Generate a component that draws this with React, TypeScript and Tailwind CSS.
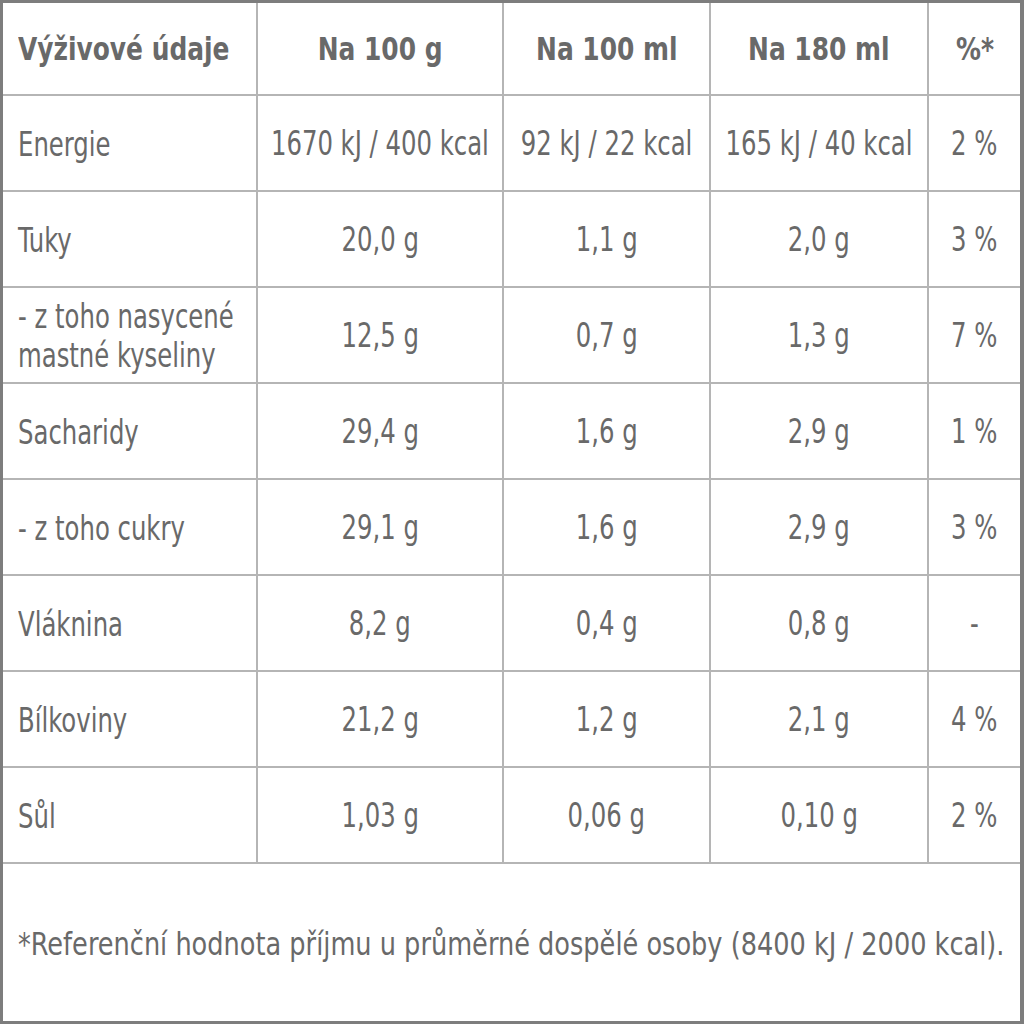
const rows: { label: string[]; a: string; b: string; c: string; d: string }[] = [
  { label: ["Energie"], a: "1670 kJ / 400 kcal", b: "92 kJ / 22 kcal", c: "165 kJ / 40 kcal", d: "2 %" },
  { label: ["Tuky"], a: "20,0 g", b: "1,1 g", c: "2,0 g", d: "3 %" },
  { label: ["- z toho nasycené", "mastné kyseliny"], a: "12,5 g", b: "0,7 g", c: "1,3 g", d: "7 %" },
  { label: ["Sacharidy"], a: "29,4 g", b: "1,6 g", c: "2,9 g", d: "1 %" },
  { label: ["- z toho cukry"], a: "29,1 g", b: "1,6 g", c: "2,9 g", d: "3 %" },
  { label: ["Vláknina"], a: "8,2 g", b: "0,4 g", c: "0,8 g", d: "-" },
  { label: ["Bílkoviny"], a: "21,2 g", b: "1,2 g", c: "2,1 g", d: "4 %" },
  { label: ["Sůl"], a: "1,03 g", b: "0,06 g", c: "0,10 g", d: "2 %" },
];

const font = {
  fontFamily: "'DejaVu Sans Condensed', 'Liberation Sans Narrow', Roboto, sans-serif",
};

// narrow text: the label font in the picture is a tall condensed face
function Narrow({ children, left }: { children: React.ReactNode; left?: boolean }) {
  return (
    <span
      className={`inline-block whitespace-nowrap scale-x-[0.82] ${left ? "origin-left" : "origin-center"}`}
    >
      {children}
    </span>
  );
}

export default function App() {
  return (
    <div
      style={font}
      className="w-[1024px] h-[1024px] bg-white text-[#696969] border-[#7d7d7d] border-t-[3px] border-l-[3px] border-r-4 border-b-[3px] flex flex-col overflow-hidden"
    >
      {/* Header */}
      <div className="flex h-[93px] border-b-2 border-[#b5b5b5] font-bold text-[32px]">
        <div className="w-[255px] border-r-2 border-[#b5b5b5] flex items-center pl-[15px]">
          <span className="inline-block whitespace-nowrap scale-x-[0.865] origin-left">Výživové údaje</span>
        </div>
        <div className="w-[246px] border-r-2 border-[#b5b5b5] flex items-center justify-center">
          <span className="inline-block whitespace-nowrap scale-x-[0.865]">Na 100 g</span>
        </div>
        <div className="w-[207px] border-r-2 border-[#b5b5b5] flex items-center justify-center">
          <span className="inline-block whitespace-nowrap scale-x-[0.865]">Na 100 ml</span>
        </div>
        <div className="w-[218px] border-r-2 border-[#b5b5b5] flex items-center justify-center">
          <span className="inline-block whitespace-nowrap scale-x-[0.865]">Na 180 ml</span>
        </div>
        <div className="flex-1 flex items-center justify-center">
          <span className="inline-block whitespace-nowrap scale-x-[0.865]">%*</span>
        </div>
      </div>

      {/* Rows */}
      {rows.map((r) => (
        <div key={r.label.join()} className="flex h-[96px] border-b-2 border-[#b5b5b5] text-[33px] leading-[39px]">
          <div className="w-[255px] border-r-2 border-[#b5b5b5] flex flex-col justify-center pl-[15px] pt-[2px]">
            {r.label.map((l) => (
              <div key={l}>
                <Narrow left>{l}</Narrow>
              </div>
            ))}
          </div>
          <div className="w-[246px] border-r-2 border-[#b5b5b5] flex items-center justify-center">
            <Narrow>{r.a}</Narrow>
          </div>
          <div className="w-[207px] border-r-2 border-[#b5b5b5] flex items-center justify-center">
            <Narrow>{r.b}</Narrow>
          </div>
          <div className="w-[218px] border-r-2 border-[#b5b5b5] flex items-center justify-center">
            <Narrow>{r.c}</Narrow>
          </div>
          <div className="flex-1 flex items-center justify-center">
            <Narrow>{r.d}</Narrow>
          </div>
        </div>
      ))}

      {/* Footnote */}
      <div className="flex-1 flex items-center pl-[15px] text-[32px] pt-[2px]">
        <span className="inline-block whitespace-nowrap scale-x-[0.89] origin-left">
          *Referenční hodnota příjmu u průměrné dospělé osoby (8400 kJ / 2000 kcal).
        </span>
      </div>
    </div>
  );
}
